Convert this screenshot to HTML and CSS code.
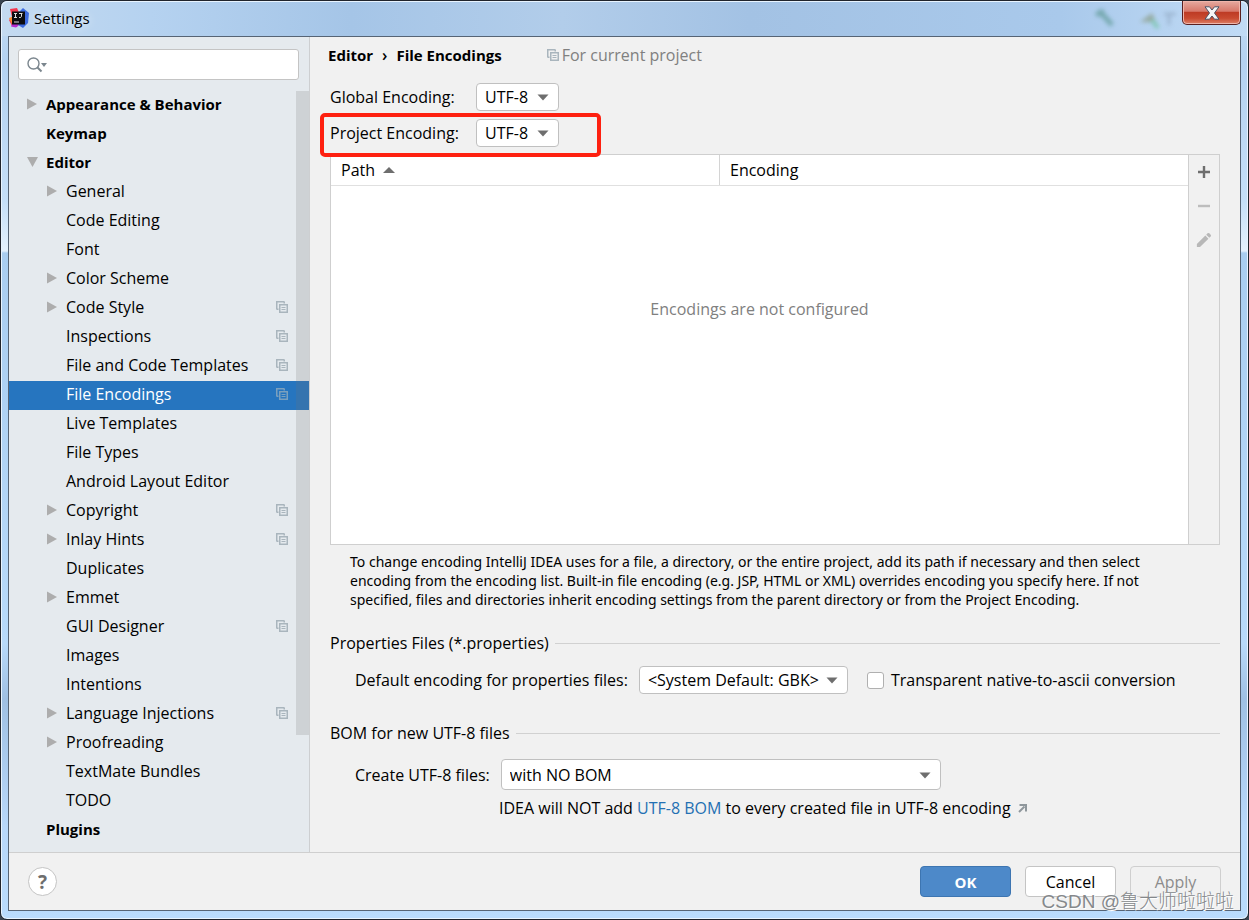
FILE: index.html
```html
<!DOCTYPE html>
<html lang="en">
<head>
<meta charset="utf-8">
<title>Settings</title>
<link rel="stylesheet" href="styles.css">
</head>
<body>
<svg class="defs" aria-hidden="true">
  <symbol id="copy" viewBox="0 0 12 12"><path d="M.75 8.5V.75H8.5M.75 8.25H2.5M8.25.75V2.500" fill="none" stroke="currentColor" stroke-width="1.5"/><path d="M3.75 3.750h7.500v7.500h-7.500z" fill="none" stroke="currentColor" stroke-width="1.5"/><path d="M5.500 6.500h4M5.500 8.500h4" stroke="currentColor"/></symbol>
  <symbol id="right" viewBox="0 0 10 12"><path d="M0 0.500 10 6 0 11.500z" fill="currentColor"/></symbol>
  <symbol id="down" viewBox="0 0 11 10"><path d="M0 0h11L5.500 10z" fill="currentColor"/></symbol>
  <symbol id="arrow" viewBox="0 0 12 7"><path d="M0.500 0.500h11L6 6.500z" fill="currentColor"/></symbol>
</svg>
<div class="window">
  <header class="titlebar">
    <svg class="logo" viewBox="0 0 20 20"><path d="M1 1 8 0 12 9 8 19 3 18 0 12 3 9z" fill="#f4364f"/><path d="M0 10l5-2 3 5-5 3z" fill="#fc8a2b"/><path d="M10 4l4-4 6 5-1 10-5 5-5-3z" fill="#3d6be0"/><path d="M4 14l6 3-3 2.500-5-1z" fill="#b52bd0"/><path d="M3 3.500h13v13H3z" fill="#0c0c10"/><path d="M5 5.500h3M6.500 5.500v4M5 9.500h3M10 5.500h3.500M12.500 5.500v3q0 1.200-2.500 1" fill="none" stroke="#ddd" stroke-width="1"/><path d="M5 14h5" stroke="#ddd" stroke-width="1"/></svg>
    <h1 class="title">Settings</h1>
    <svg class="ghost" viewBox="0 0 90 30"><path d="M6 8l6 5 8 9M4 12l8-4" stroke="#5f9a97" stroke-width="5" fill="none"/><path d="M48 19l12-9 4 9z" fill="#8a9a82"/><path d="M60 17l6 8" stroke="#6fc4a0" stroke-width="4"/><path d="M72 11h12M77 11v11" stroke="#91a9c4" stroke-width="3"/></svg>
    <button class="close" aria-label="Close"><svg viewBox="0 0 16 14"><path d="M1 .8h4.500L8 4 10.500.8H15L10.500 7 15 13.200h-4.500L8 10l-2.500 3.200H1L5.500 7z" fill="#f6f6f6" stroke="#4c5365"/></svg></button>
  </header>
  <div class="client">
    <div class="body">
      <aside class="sidebar">
        <label class="search">
          <svg viewBox="0 0 20 16"><circle cx="6.500" cy="6.500" r="5.500" fill="none" stroke="#7b868e" stroke-width="1.400"/><path d="M10.500 10.500l4 4" stroke="#7b868e" stroke-width="2"/><path d="M14 6h6l-3 4z" fill="#7b868e"/></svg>
          <input type="text" aria-label="Search settings">
        </label>
        <div class="tree-wrap">
          <ul class="tree">
            <li class="top"><svg class="tw"><use href="#right"/></svg>Appearance &amp; Behavior</li>
            <li class="top">Keymap</li>
            <li class="top"><svg class="tw open"><use href="#down"/></svg>Editor</li>
            <li><svg class="tw"><use href="#right"/></svg>General</li>
            <li>Code Editing</li>
            <li>Font</li>
            <li><svg class="tw"><use href="#right"/></svg>Color Scheme</li>
            <li><svg class="tw"><use href="#right"/></svg>Code Style<svg class="cp"><use href="#copy"/></svg></li>
            <li>Inspections<svg class="cp"><use href="#copy"/></svg></li>
            <li>File and Code Templates<svg class="cp"><use href="#copy"/></svg></li>
            <li class="selected">File Encodings<svg class="cp"><use href="#copy"/></svg></li>
            <li>Live Templates</li>
            <li>File Types</li>
            <li>Android Layout Editor</li>
            <li><svg class="tw"><use href="#right"/></svg>Copyright<svg class="cp"><use href="#copy"/></svg></li>
            <li><svg class="tw"><use href="#right"/></svg>Inlay Hints<svg class="cp"><use href="#copy"/></svg></li>
            <li>Duplicates</li>
            <li><svg class="tw"><use href="#right"/></svg>Emmet</li>
            <li>GUI Designer<svg class="cp"><use href="#copy"/></svg></li>
            <li>Images</li>
            <li>Intentions</li>
            <li><svg class="tw"><use href="#right"/></svg>Language Injections<svg class="cp"><use href="#copy"/></svg></li>
            <li><svg class="tw"><use href="#right"/></svg>Proofreading</li>
            <li>TextMate Bundles</li>
            <li>TODO</li>
            <li class="top">Plugins</li>
          </ul>
          <div class="thumb"></div>
        </div>
      </aside>
      <main class="content">
        <div class="crumbs"><b>Editor</b><span class="sep">›</span><b>File Encodings</b><span class="scope"><svg><use href="#copy"/></svg>For current project</span></div>
        <div class="field"><label for="global">Global Encoding:</label><span class="combo small"><select id="global"><option>UTF-8</option></select><svg><use href="#arrow"/></svg></span></div>
        <div class="field marked"><label for="project">Project Encoding:</label><span class="combo small"><select id="project"><option>UTF-8</option></select><svg><use href="#arrow"/></svg></span></div>
        <div class="panel">
          <table class="grid">
            <thead><tr><th class="path">Path<svg><path d="M0 6 6 0l6 6z" fill="#6e6e6e"/></svg></th><th><span class="enc">Encoding</span></th></tr></thead>
            <tbody><tr><td colspan="2">Encodings are not configured</td></tr></tbody>
          </table>
          <div class="tools">
            <button aria-label="Add"><svg viewBox="0 0 16 16"><path d="M8 2v12M2 8h12" stroke="#6e6e6e" stroke-width="2.400"/></svg></button>
            <button aria-label="Remove" disabled><svg viewBox="0 0 16 16"><path d="M2 8h12" stroke="#bdbdbd" stroke-width="2.400"/></svg></button>
            <button aria-label="Edit" disabled><svg viewBox="0 0 18 18"><path d="M1 13.500 10.500 4l3.500 3.500L4.500 17H1zM11.500 3l1.500-1.500q1-1 2 0l1.500 1.500q1 1 0 2L15 6.500z" fill="#b8b8b8"/></svg></button>
          </div>
        </div>
        <p class="note">To change encoding IntelliJ IDEA uses for a file, a directory, or the entire project, add its path if necessary and then select encoding from the encoding list. Built-in file encoding (e.g. JSP, HTML or XML) overrides encoding you specify here. If not specified, files and directories inherit encoding settings from the parent directory or from the Project Encoding.</p>
        <h2 class="section">Properties Files (*.properties)</h2>
        <div class="row"><label for="props">Default encoding for properties files:</label><span class="combo medium"><select id="props"><option>&lt;System Default: GBK&gt;</option></select><svg><use href="#arrow"/></svg></span><label class="check"><input type="checkbox">Transparent native-to-ascii conversion</label></div>
        <h2 class="section second">BOM for new UTF-8 files</h2>
        <div class="row bom"><label for="bom">Create UTF-8 files:</label><span class="combo large"><select id="bom"><option>with NO BOM</option></select><svg><use href="#arrow"/></svg></span></div>
        <p class="hint">IDEA will NOT add <a href="#bom">UTF-8 BOM</a> to every created file in UTF-8 encoding<svg viewBox="0 0 9 9"><path d="M1 8l5.500-5.500" stroke="#8f979c" stroke-width="2"/><path d="M1.500 0H9v7.500H7L7 2H1.500z" fill="#8f979c"/></svg></p>
      </main>
    </div>
    <footer class="footer">
      <button class="help" aria-label="Help">?</button>
      <button class="btn primary">OK</button>
      <button class="btn">Cancel</button>
      <button class="btn" disabled>Apply</button>
    </footer>
  </div>
  <div class="watermark">CSDN @鲁大师啦啦啦</div>
</div>
</body>
</html>
```
FILE: styles.css
```css
*, *::before, *::after { box-sizing: border-box; }
body, h1, h2, p, ul { margin: 0; padding: 0; }
body {
  background: #3a4450;
  color: #000;
  font: 16px/20px "Open Sans", "Noto Sans", "Noto Sans CJK SC", sans-serif;
}
button, input, select { font: inherit; color: inherit; }
svg { display: block; flex: none; }
.defs { position: absolute; width: 0; height: 0; }

.window {
  position: relative;
  display: flex;
  flex-direction: column;
  min-height: 100vh;
  padding: 0 8px 8px;
  border: 1px solid #20242c;
  border-radius: 7px;
  background: linear-gradient(180deg, #c5dcf3 0, #b4d2f1 60px, #c5dff8 200px, #e4f1fd 250px, #a9cdf0 252px, #b8dafa 70%, #9fc0e3 76%, #b8d8fa 90%, #b9dbfc);
  box-shadow: inset 0 0 0 1px #e8f4ff;
}
.titlebar {
  display: flex;
  align-items: center;
  height: 35px;
  margin: 0 -7px;
  padding: 0 0 2px 7px;
  border-radius: 6px 6px 0 0;
  background: linear-gradient(90deg, #c4daf0 0, #b5d2f0 12%, #a5c5e7 28%, #b2cdea 45%, #a3c2e4 60%, #a9c9eb 85%, #c1dbf5);
  box-shadow: inset 0 1px #e8f4ff;
}
.logo { width: 20px; height: 20px; }
.title { margin-left: 5px; font-size: 15px; font-weight: 400; text-shadow: 0 0 9px #fff; }
.ghost { width: 90px; height: 30px; margin-left: auto; filter: blur(2px); opacity: .7; }
.close {
  display: flex;
  align-items: center;
  justify-content: center;
  align-self: flex-start;
  width: 59px;
  height: 24px;
  margin-right: 6px;
  padding: 0;
  border: 1px solid #5a2020;
  border-top: 0;
  border-radius: 0 0 5px 5px;
  background: linear-gradient(#e5aaa0, #d7786a 45%, #bd3a24 48%, #c94a30 75%, #dd8066);
  box-shadow: inset 0 0 0 1px #efb5aa;
}
.close svg { width: 16px; height: 14px; }

.client {
  flex: 1;
  display: flex;
  flex-direction: column;
  border: 1px solid #566475;
  margin: 0 -1px;
  background: #f1f1f1;
}
.body { flex: 1; display: flex; }
.sidebar {
  display: flex;
  flex-direction: column;
  width: 301px;
  padding-top: 12px;
  border-right: 1px solid #cdcfd1;
  background: #e5eaee;
}
.search {
  display: flex;
  align-items: center;
  height: 31px;
  margin: 0 10px 11px 9px;
  padding: 0 8px;
  border: 1px solid #c4c4c4;
  border-radius: 3px;
  background: #fff;
}
.search svg { width: 20px; height: 16px; }
.search input { flex: 1; min-width: 0; border: 0; outline: 0; background: none; }
.tree-wrap { position: relative; flex: 1; }
.tree { list-style: none; }
.tree li { display: flex; align-items: center; height: 29px; padding: 0 21px 3px 57px; }
.tree .top { padding-left: 37px; font-size: 15px; font-weight: 700; }
.tree .selected { background: #2675bf; color: #fff; }
.tw { width: 10px; height: 12px; margin: 0 9px 0 -19px; color: #adadad; }
.tw.open { width: 11px; height: 10px; margin-right: 8px; }
.cp { width: 12px; height: 12px; margin-left: auto; color: #a9b5bd; }
.selected .cp { color: #7ba0be; }
.thumb { position: absolute; top: 0; right: 0; width: 13px; height: 644px; background: rgba(115, 115, 115, .2); }

.content { flex: 1; display: flex; flex-direction: column; min-width: 0; padding: 8px 20px 34px; }
.crumbs { display: flex; align-items: center; height: 20px; margin: 0 0 18px -2px; }
.crumbs b { font-size: 15px; }
.sep { margin: 0 9px; font-weight: 600; }
.scope { display: flex; align-items: center; gap: 3px; margin-left: 45px; color: #808080; }
.scope svg { width: 12px; height: 12px; color: #a9b5bd; }
.field { position: relative; display: flex; align-items: center; margin-bottom: 8px; }
.field label { width: 146px; }
.marked { margin-bottom: 7px; }
.marked::after {
  content: "";
  position: absolute;
  z-index: 1;
  top: -6px;
  left: -10px;
  width: 281px;
  height: 44px;
  border: 4px solid #fe2010;
  border-radius: 5px;
  pointer-events: none;
}
.combo { position: relative; display: flex; height: 28px; }
.combo select {
  width: 100%;
  padding: 0 8px;
  border: 1px solid #c0c0c0;
  border-radius: 4px;
  background: #fff;
  appearance: none;
}
.combo svg { position: absolute; top: 11px; right: 10px; width: 12px; height: 7px; color: #6e6e6e; pointer-events: none; }
.small { width: 83px; }
.medium { width: 209px; }
.large { width: 440px; height: 31px; }
.large svg { top: 13px; }

.panel { flex: 1; display: flex; border: 1px solid #cfcfcf; }
.grid { flex: 1; border-collapse: collapse; background: #fff; }
.grid th { height: 30px; padding: 0; border-bottom: 1px solid #e0e0e0; font-weight: 400; text-align: left; }
.grid .path { width: 388px; padding-left: 10px; }
.path svg { display: inline-block; width: 12px; height: 6px; margin-left: 8px; vertical-align: 3px; }
.enc { display: block; padding: 5px 10px; border-left: 1px solid #d4d4d4; }
.grid td { padding: 113px 0 0; color: #808080; text-align: center; vertical-align: top; }
.tools { display: flex; flex-direction: column; width: 31px; border-left: 1px solid #cfcfcf; }
.tools button { display: flex; align-items: center; justify-content: center; height: 34px; padding: 0; border: 0; background: none; }
.tools svg { width: 16px; height: 16px; }

.note { margin: 7px 40px 0 20px; font: 14px/19px "Noto Sans", "Open Sans", sans-serif; }
.section { display: flex; align-items: center; gap: 6px; margin-top: 24px; font-size: 16px; font-weight: 400; }
.section::after { content: ""; flex: 1; height: 1px; background: #d1d1d1; }
.row { display: flex; align-items: center; gap: 11px; margin: 13px 0 0 25px; }
.check { display: flex; align-items: center; gap: 7px; margin-left: 8px; }
.check input { width: 17px; height: 17px; margin: 0; border: 1px solid #b0b0b0; border-radius: 3px; background: #fff; appearance: none; }
.second { margin-top: 29px; }
.bom { margin-top: 16px; }
.hint { display: flex; align-items: center; margin: 8px 0 0 169px; white-space: pre; }
.hint a { color: #2470b3; text-decoration: none; }
.hint svg { width: 9px; height: 9px; margin-left: 7px; }

.footer { display: flex; align-items: center; gap: 14px; height: 58px; padding: 0 19px; border-top: 1px solid #cfcfcf; }
.help { width: 29px; height: 29px; margin-right: auto; padding: 0; border: 1px solid #c4c4c4; border-radius: 50%; background: #fff; color: #6e6e6e; font-size: 19px; font-weight: 700; }
.btn { width: 91px; height: 31px; padding: 0; border: 1px solid #c4c4c4; border-radius: 4px; background: #fff; }
.btn.primary { border-color: #3d75b1; background: #4d89c9; color: #fff; font-size: 15px; font-weight: 700; }
.btn:disabled { border-color: #cfcfcf; background: none; color: #8c8c8c; }
.watermark {
  position: absolute;
  right: 14px;
  bottom: 5px;
  color: #85888b;
  font: 300 19px/24px "Liberation Sans", "Noto Sans CJK SC", sans-serif;
  text-shadow: 1px 1px #fff;
  pointer-events: none;
}
```
